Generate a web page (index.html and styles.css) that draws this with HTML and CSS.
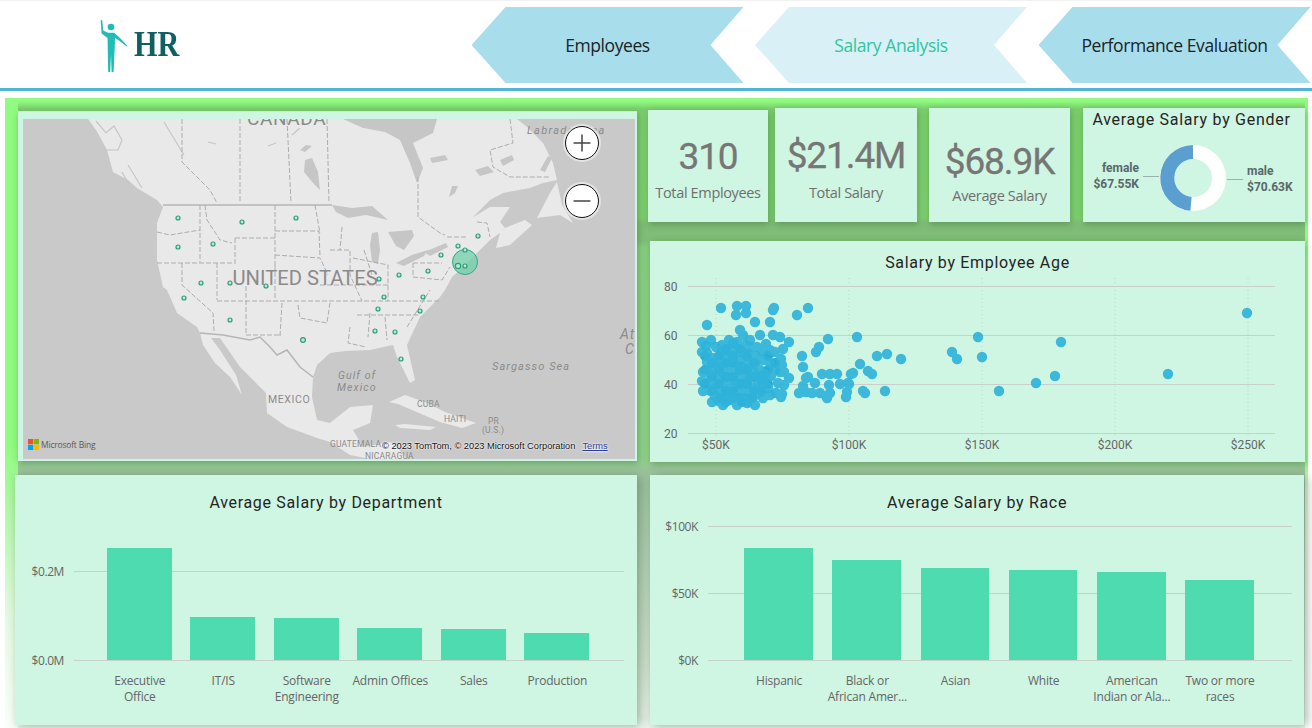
FILE: index.html
```html
<!DOCTYPE html>
<html lang="en">
<head>
<meta charset="utf-8">
<title>HR Salary Analysis</title>
<link rel="stylesheet" href="styles.css">
</head>
<body>
<header class="topbar">
  <div class="logo">
    <svg class="logo-figure" viewBox="98 18 32 56" aria-hidden="true">
      <circle cx="111" cy="27" r="3.3"/>
      <path d="M100.6 20.5 L102.2 20 L103.2 30.6 L108 32.8 H114.2 L120.5 38.5 L127.6 46 L126.8 46.6 L119 40.6 L115 37.8 L114.6 50 L113.6 72 H111.6 L111 54 L110.2 72 H108.2 L107.8 50 L107.6 38 L101.6 33.6 Z"/>
    </svg>
    <span class="logo-text">HR</span>
  </div>
  <nav class="tabs">
    <a class="tab">Employees</a>
    <a class="tab tab-active">Salary Analysis</a>
    <a class="tab">Performance Evaluation</a>
  </nav>
</header>
<main class="board">
  <section class="card map-card">
    <div class="map">
      <svg class="map-svg" viewBox="23 119 612 340" aria-label="Map of employees by state">
        <path class="land" d="M88 119 L96 130 L100 137 L107 150 L113 172 L128 180 L137 188 L157 200 L163 207 L157 223 L157 260 L163 287 L167 290 L177 313 L197 327 L200 333 L203 345 L215 363 L230 377 L242 395 L236 375 L220 350 L211 338 L220 338 L240 367 L266 393 L267 413 L287 427 L317 438 L330 442 L350 455 L370 459 L407 459 L397 447 L390 442 L363 447 L353 430 L370 423 L373 405 L350 407 L330 423 L317 420 L312 397 L313 377 L317 365 L330 353 L345 351 L370 350 L393 345 L397 357 L410 383 L415 380 L407 345 L420 317 L440 297 L445 290 L452 277 L462 268 L478 252 L490 240 L500 233 L496 248 L510 245 L532 225 L525 220 L505 228 L500 222 L510 207 L490 207 L480 213 L460 225 L457 233 L490 200 L503 193 L530 188 L543 183 L557 180 L553 163 L543 143 L527 127 L517 119 Z"/>
        <path class="land" d="M537 218 L550 193 L557 182 L562 205 L573 223 L560 215 Z"/>
        <path class="land" d="M389 402 L405 395 L425 402 L445 412 L476 423 L462 428 L440 422 L412 410 L398 404 Z"/>
        <path class="land" d="M395 425 L405 424 L436 427 L430 430 L400 428 Z"/>
        <path class="water" d="M343 119 L363 128 L385 132 L400 140 L410 163 L417 183 L423 168 L413 143 L433 133 L437 119 Z"/>
        <path class="water" d="M305 160 L312 158 L318 172 L320 190 L313 183 L304 172 Z"/>
        <path class="water" d="M332 205 L352 208 L372 206 L388 220 L366 215 L348 218 L336 212 Z"/>
        <path class="water" d="M372 233 L378 232 L380 250 L378 264 L372 262 L370 245 Z"/>
        <path class="water" d="M388 232 L412 230 L414 236 L404 250 L396 246 Z"/>
        <path class="water" d="M396 263 L412 255 L428 250 L424 256 L404 266 Z"/>
        <path class="water" d="M424 252 L446 243 L448 247 L430 256 Z"/>
        <path class="water" d="M449 197 L455 193 L458 186 L452 186 Z M430 158 L445 155 L448 160 L432 163 Z M300 150 L306 145 L312 146 L305 152 Z M475 170 L488 166 L494 172 L480 176 Z M500 160 L512 155 L514 160 L503 166 Z M540 170 L548 156 L552 158 L545 172 Z"/>
        <path class="fjord" d="M96 121 L106 133 L114 126 L122 140 L118 150 L104 150 M122 172 L132 190 M128 165 L142 188 M184 155 L164 122 M208 142 L216 144 M268 146 L276 143 M292 135 L300 128"/>
        <path class="border-solid" d="M163 205 H332 M200 333 L223 335 L250 340 L260 337 L270 347 L277 355 L287 350 L300 367 L313 377"/>
        <path class="border-dash" d="M182 119 V162 L195 175 L210 190 L217 203 M240 119 V203 M287 119 L291 203 M327 119 L329 203 M200 205 V262 M205 205 L207 220 L220 240 L232 243 M235 238 H275 M235 238 V265 M275 205 V265 M275 231 H319 L320 257 M275 255 L320 258 L328 275 M315 205 L320 233 M157 232 L170 235 L200 230 M157 263 H233 M182 263 V285 L213 313 L214 331 M217 263 V300 M217 301 H440 M246 286 V335 M246 335 H280 M282 303 L280 336 M298 305 L300 318 L327 323 L330 303 M275 265 V300 M330 250 H350 V275 L362 301 M353 258 L388 265 V301 M413 263 H442 M413 263 V277 L442 280 L450 267 M418 177 V217 L440 233 L445 235 M447 237 H467 M477 222 L487 223 L490 237 M510 119 L513 143 L490 150 L493 167 L510 177 H550 M357 315 H420 M370 313 L368 337 M385 317 L387 340 M350 327 L348 343 L366 347 M407 327 L430 290 M342 227 L340 250 M320 285 H388 M364 250 L372 275"/>
        <text class="lbl lbl-country" x="247" y="125">CANADA</text>
        <text class="lbl lbl-us" x="232.5" y="285">UNITED STATES</text>
        <text class="lbl lbl-small" x="268" y="403">MEXICO</text>
        <text class="lbl lbl-sea lbl-labrador" x="527" y="134">Labrador Sea</text>
        <text class="lbl lbl-sea lbl-sargasso" x="492" y="370">Sargasso Sea</text>
        <text class="lbl lbl-sea" x="338" y="379">Gulf of</text>
        <text class="lbl lbl-sea" x="337" y="391">Mexico</text>
        <text class="lbl lbl-sea lbl-atl" x="620" y="339">At</text>
        <text class="lbl lbl-sea lbl-atl" x="625" y="354">C</text>
        <text class="lbl lbl-tiny" x="417" y="407">CUBA</text>
        <text class="lbl lbl-tiny" x="444" y="422">HAITI</text>
        <text class="lbl lbl-tiny" x="488" y="424">PR</text>
        <text class="lbl lbl-tiny" x="482" y="433">(U.S.)</text>
        <text class="lbl lbl-tiny" x="330" y="447">GUATEMALA</text>
        <text class="lbl lbl-tiny" x="365" y="459">NICARAGUA</text>
        <g class="pins">
          <circle class="pin-big" cx="465" cy="262" r="12.5"/>
          <circle cx="178" cy="218" r="2"/><circle cx="242" cy="222" r="2"/><circle cx="296" cy="218" r="2"/>
          <circle cx="178" cy="247" r="2"/><circle cx="213" cy="244" r="2"/><circle cx="201" cy="283" r="2"/>
          <circle cx="230" cy="283" r="2"/><circle cx="266" cy="286" r="2"/><circle cx="184" cy="298" r="2"/>
          <circle cx="230" cy="320" r="2"/><circle cx="303" cy="340" r="2.4"/><circle cx="478" cy="236" r="2"/>
          <circle cx="458" cy="246" r="2"/><circle cx="465" cy="250" r="2"/><circle cx="441" cy="255" r="2"/>
          <circle cx="458" cy="266" r="2.6"/><circle cx="465" cy="266" r="2"/><circle cx="428" cy="271" r="2"/>
          <circle cx="399" cy="275" r="2"/><circle cx="379" cy="279" r="2"/><circle cx="384" cy="297" r="2"/>
          <circle cx="423" cy="297" r="2"/><circle cx="378" cy="309" r="2"/><circle cx="420" cy="311" r="2"/>
          <circle cx="375" cy="331" r="2"/><circle cx="395" cy="332" r="2"/><circle cx="401" cy="359" r="2"/>
        </g>
      </svg>
      <div class="map-controls">
        <button class="zoom-btn"><svg viewBox="0 0 34 34"><path d="M8 17 H26 M17 8 V26"/></svg></button>
        <button class="zoom-btn"><svg viewBox="0 0 34 34"><path d="M8 17 H26"/></svg></button>
      </div>
      <div class="bing">
        <svg class="bing-logo" viewBox="0 0 11 11"><rect class="ms-r" width="5.2" height="5.2"/><rect class="ms-g" x="5.8" width="5.2" height="5.2"/><rect class="ms-b" y="5.8" width="5.2" height="5.2"/><rect class="ms-y" x="5.8" y="5.8" width="5.2" height="5.2"/></svg>
        <span>Microsoft Bing</span>
      </div>
      <div class="attribution"><span>© 2023 TomTom, © 2023 Microsoft Corporation</span><a class="terms">Terms</a></div>
    </div>
  </section>

  <div class="right-top">
    <div class="kpis">
      <div class="card kpi kpi-employees"><div class="kpi-value">310</div><div class="kpi-label">Total Employees</div></div>
      <div class="card kpi kpi-total"><div class="kpi-value">$21.4M</div><div class="kpi-label">Total Salary</div></div>
      <div class="card kpi kpi-average"><div class="kpi-value">$68.9K</div><div class="kpi-label">Average Salary</div></div>
      <div class="card gender">
        <h2 class="gender-title">Average Salary by Gender</h2>
        <div class="gender-body">
          <div class="legend legend-left"><b>female</b><b>$67.55K</b></div>
          <span class="leader leader-left"></span>
          <svg class="donut" viewBox="0 0 68 68" aria-hidden="true">
            <circle class="donut-male" cx="34" cy="34" r="26"/>
            <path class="donut-female" d="M34 8 A26 26 0 0 0 32 59.9"/>
          </svg>
          <span class="leader leader-right"></span>
          <div class="legend legend-right"><b>male</b><b>$70.63K</b></div>
        </div>
      </div>
    </div>
    <section class="card scatter">
      <h2 class="card-title">Salary by Employee Age</h2>
      <svg class="scatter-svg" viewBox="650 273 655 189" aria-label="Scatter chart">
        <path class="grid-x" d="M716 278 V436 M849 278 V436 M982 278 V436 M1115 278 V436 M1248 278 V436"/>
        <path class="grid-y" d="M688 286.5 H1275 M688 335.5 H1275 M688 384.5 H1275 M688 433.5 H1275"/>
        <text class="axis" x="664" y="291">80</text>
        <text class="axis" x="664" y="340">60</text>
        <text class="axis" x="664" y="389">40</text>
        <text class="axis" x="664" y="438">20</text>
        <text class="axis mid" x="716" y="449">$50K</text>
        <text class="axis mid" x="849" y="449">$100K</text>
        <text class="axis mid" x="982" y="449">$150K</text>
        <text class="axis mid" x="1115" y="449">$200K</text>
        <text class="axis mid" x="1248" y="449">$250K</text>
        <path class="dots-under" d="M726 349h0M740 349h0M705 356h0M719 356h0M733 356h0M747 356h0M768 356h0M712 363h0M726 363h0M733 363h0M754 363h0M775 363h0M705 370h0M719 370h0M740 370h0M747 370h0M768 370h0M712 377h0M726 377h0M733 377h0M754 377h0M761 377h0M705 384h0M719 384h0M740 384h0M747 384h0M768 384h0M712 391h0M726 391h0M733 391h0M754 391h0M761 391h0M720 398h0M733 398h0M740 398h0M752 398h0M726 402h0M742 402h0"/>
        <g class="dots">
          <path d="M1247 313h0M1168 374h0M1061 342h0M1055 376h0M1036 383h0M999 391h0M978 337h0M982 357h0M952 352h0M957 359h0M901 359h0M887 354h0M877 356h0M857 337h0M860 364h0M868 371h0M872 374h0M885 391h0M863 391h0M865 393h0M853 373h0M851 374h0M848 383h0M846 397h0M847 392h0M849 384h0M837 374h0M840 384h0M830 374h0M822 374h0M827 398h0M829 385h0M830 393h0M820 393h0M812 393h0M806 392h0M799 393h0M803 386h0M806 378h0M808 377h0M815 383h0M803 367h0M802 356h0M816 352h0M819 347h0M828 339h0M797 315h0M808 308h0M774 308h0M773 310h0M770 322h0M755 322h0M721 308h0M737 306h0M746 306h0M736 315h0M746 313h0M707 325h0M740 330h0M743 335h0M760 335h0M773 335h0M780 337h0M789 342h0M702 342h0M711 340h0M702 352h0M707 353h0M722 345h0M729 340h0M737 342h0M745 345h0M750 347h0M757 347h0M762 351h0M766 344h0M770 350h0M775 352h0M783 349h0M781 359h0M782 365h0M780 372h0M784 372h0M789 378h0M784 385h0M778 383h0M776 393h0M781 397h0M782 394h0"/>
          <path d="M770 395h0M763 398h0M755 405h0M750 402h0M745 398h0M737 405h0M731 400h0M723 405h0M719 401h0M715 396h0M711 391h0M703 391h0M702 381h0M703 372h0M710 381h0M708 372h0M707 362h0M714 358h0M721 352h0M728 350h0M735 349h0M742 352h0M749 354h0M756 356h0M763 360h0M770 363h0M775 370h0M771 376h0M765 380h0M758 382h0"/>
          <path d="M752 388h0M745 392h0M738 396h0M730 394h0M722 395h0M716 388h0M720 380h0M715 372h0M713 365h0M720 362h0M727 358h0M734 357h0M741 360h0M748 362h0M755 364h0M760 370h0M757 376h0M750 378h0M744 384h0M737 388h0M730 387h0M723 386h0M727 380h0"/>
          <path d="M722 372h0M720 367h0M727 365h0M734 364h0M741 367h0M748 369h0M753 372h0M748 374h0M741 377h0M735 380h0M729 374h0M734 372h0M741 372h0M760 392h0M755 395h0M768 388h0M765 374h0M762 385h0M712 402h0M726 401h0M747 403h0M706 346h0M716 347h0M733 343h0M750 340h0"/>
        </g>
      </svg>
    </section>
  </div>

  <section class="card bars bars-dept">
    <h2 class="card-title">Average Salary by Department</h2>
    <div class="plot">
      <span class="gridline" style="top:45px"><em>$0.2M</em></span>
      <span class="gridline" style="top:134px"><em>$0.0M</em></span>
      <div class="bar-row">
        <i class="bar" style="height:112px"></i><i class="bar" style="height:43px"></i><i class="bar" style="height:42px"></i><i class="bar" style="height:32px"></i><i class="bar" style="height:31px"></i><i class="bar" style="height:27px"></i>
      </div>
    </div>
    <div class="cats">
      <span>Executive Office</span><span>IT/IS</span><span>Software Engineering</span><span>Admin Offices</span><span>Sales</span><span>Production</span>
    </div>
  </section>

  <section class="card bars bars-race">
    <h2 class="card-title">Average Salary by Race</h2>
    <div class="plot">
      <span class="gridline" style="top:0"><em>$100K</em></span>
      <span class="gridline" style="top:67px"><em>$50K</em></span>
      <span class="gridline" style="top:134px"><em>$0K</em></span>
      <div class="bar-row">
        <i class="bar" style="height:112px"></i><i class="bar" style="height:100px"></i><i class="bar" style="height:92px"></i><i class="bar" style="height:90px"></i><i class="bar" style="height:88px"></i><i class="bar" style="height:80px"></i>
      </div>
    </div>
    <div class="cats">
      <span>Hispanic</span><span>Black or African Amer...</span><span>Asian</span><span>White</span><span>American Indian or Ala...</span><span>Two or more races</span>
    </div>
  </section>
</main>
</body>
</html>
```
FILE: styles.css
```css
* { box-sizing: border-box; }
html, body { margin: 0; padding: 0; height: 728px; overflow: hidden; background: #fff; }
body { font-family: Roboto, "Liberation Sans", sans-serif; color: #252423; }

.topbar {
  height: 91px;
  display: flex;
  align-items: flex-start;
  border-top: 1px solid #f2f2f2;
  border-bottom: 3px solid #53b5d5;
}
.logo { display: flex; align-items: flex-end; margin: 17px 0 0 98px; }
.logo-figure { width: 32px; height: 56px; fill: #1fbdb5; }
.logo-text {
  font: 700 36px/1 "Liberation Serif", serif;
  color: #0f5f63;
  margin: 0 0 12px 4px;
  transform: scaleX(.84);
  transform-origin: left center;
}
.tabs { display: flex; gap: 11.5px; margin: 6px 1.5px 0 auto; }
.tab {
  width: 272px;
  height: 76px;
  display: flex;
  align-items: center;
  justify-content: center;
  background: #a8ddec;
  clip-path: polygon(34px 0, 100% 0, 239px 50%, 100% 100%, 34px 100%, 0 50%);
  font: 400 17.5px "Open Sans", sans-serif;
  letter-spacing: -0.42px;
  color: #182426;
}
.tab-active { background: #d9f0f7; color: #33c49c; }

.board {
  position: relative;
  width: 1303px;
  height: 630px;
  margin: 7px 0 0 5px;
  padding: 10px 0 0 10px;
  display: grid;
  grid-template-columns: 622px 657px;
  grid-template-rows: 354px 250px;
  column-gap: 11px;
  row-gap: 13px;
  background: linear-gradient(180deg, #90fb80 0, #90fb80 3px, #7ad06c 11px, #7dd070 120px, #7fbd78 125px, #7fbd78 142px, #86cf80 150px, #8ed088 360px, #9cc49e 374px, #cfe4cf 560px, #eef7ee 630px);
}
.board::before,
.board::after {
  content: "";
  position: absolute;
  top: 0;
  bottom: 0;
  background: linear-gradient(180deg, #90fb80 0, #90fb80 55%, #b8f9b0 68%, #e2fbe0 82%, #fafffa 100%);
}
.board::before { left: 0; width: 13px; }
.board::after { right: 0; width: 3px; background: linear-gradient(180deg, #90fb80 0, #90fb80 58%, #e8f6e8 62%, #fff 100%); }
.card {
  position: relative;
  z-index: 1;
  background: #cff5e3;
  box-shadow: 1px 2px 7px rgba(40, 70, 40, .35);
}

.map-card { margin: 3px 0 1px 3px; padding: 8px 2px 2px 5px; }
.map { position: relative; height: 340px; background: #c9c9c9; overflow: hidden; }
.map-svg { display: block; width: 612px; height: 340px; }
.land { fill: #e9e9e9; }
.water { fill: #c6c6c6; }
.fjord { fill: none; stroke: #c6c6c6; stroke-width: 1.2; }
.border-solid { fill: none; stroke: #b5b5b5; stroke-width: 1.5; }
.border-dash { fill: none; stroke: #adadad; stroke-width: 1; stroke-dasharray: 5 2; }
.lbl { font-family: Roboto, sans-serif; fill: #8b8b8b; }
.lbl-country { font-size: 19px; letter-spacing: .6px; }
.lbl-us { font-size: 20.2px; }
.lbl-small { font-size: 10.5px; letter-spacing: .6px; }
.lbl-sea { font-size: 10.5px; font-style: italic; letter-spacing: 1.1px; }
.lbl-sargasso { font-size: 11px; }
.lbl-labrador { font-size: 11px; letter-spacing: 1.3px; }
.lbl-atl { font-size: 14px; }
.lbl-tiny { font-size: 8.5px; letter-spacing: .2px; }
.pins circle { fill: #bfe7d5; stroke: #2d9e7a; stroke-width: 1.2; }
.pins .pin-big { fill: #6fd0ab; fill-opacity: .75; stroke: #3aa585; stroke-width: 1; }
.map-controls {
  position: absolute;
  top: 7px;
  right: 36px;
  display: flex;
  flex-direction: column;
  gap: 24px;
}
.zoom-btn {
  width: 34px;
  height: 34px;
  padding: 0;
  border: 1.5px solid #111;
  border-radius: 50%;
  background: #fff;
  box-shadow: 0 0 0 2px rgba(235,235,235,.8);
  display: block;
}
.zoom-btn svg { display: block; width: 100%; height: 100%; fill: none; stroke: #444; stroke-width: 1.6; }
.bing {
  position: absolute;
  left: 5px;
  bottom: 9px;
  display: flex;
  align-items: center;
  gap: 2px;
  font: 8.5px "Open Sans", sans-serif;
  letter-spacing: -.2px;
  color: #5a5a5a;
}
.bing-logo { width: 11px; height: 11px; }
.ms-r { fill: #f25022; }
.ms-g { fill: #7fba00; }
.ms-b { fill: #00a4ef; }
.ms-y { fill: #ffb900; }
.attribution {
  position: absolute;
  left: 359px;
  bottom: 7px;
  display: flex;
  gap: 7px;
  font: 9.25px/12px "Liberation Sans", sans-serif;
  color: #111;
  white-space: nowrap;
  text-shadow: 0 0 2px #fff, 0 0 2px #fff;
}
.terms { color: #2a3f96; text-decoration: underline; }

.right-top { display: flex; flex-direction: column; gap: 19px; }
.kpis { height: 114px; display: flex; align-items: flex-end; }
.kpi { height: 114px; display: flex; flex-direction: column; align-items: center; text-align: center; color: #7a7a7a; }
.kpi-employees { width: 120px; height: 112px; margin-right: 7px; padding-top: 26px; }
.kpi-total { width: 142px; margin-right: 12px; padding-top: 27px; }
.kpi-average { width: 141px; margin-right: 13px; padding-top: 33px; }
.kpi-value { font-size: 37px; line-height: 42px; font-weight: 400; letter-spacing: -1.1px; color: #767676; -webkit-text-stroke: .3px #767676; }
.kpi-label { font: 400 14.5px/20px "Open Sans", sans-serif; letter-spacing: -.35px; color: #6f6f6f; margin-top: 5px; }
.kpi-total .kpi-label { margin-top: 6px; }
.kpi-average .kpi-label { margin-top: 3px; }
.gender { width: 222px; height: 114px; padding-top: 2px; }
.gender-title { margin: 0; padding-right: 5px; font-size: 16px; line-height: 20px; font-weight: 400; letter-spacing: .72px; text-align: center; color: #252423; white-space: nowrap; }
.gender-body { display: flex; align-items: center; height: 80px; margin-top: 8px; }
.legend { display: flex; flex-direction: column; font-size: 12px; line-height: 16px; color: #59686a; }
.legend b { font-weight: 700; }
.legend-left { width: 56px; margin: -5px 0 0 0; align-items: flex-end; }
.legend-right { width: 52px; margin: 1px 0 0 4px; }
.leader { height: 1px; width: 16px; background: #9db3aa; }
.leader-left { margin: -4px 0 0 4px; }
.leader-right { margin-top: 2px; }
.donut { width: 68px; height: 68px; flex: none; fill: none; stroke-width: 14; }
.donut-male { stroke: #fff; }
.donut-female { stroke: #5a9fd0; }

.card-title { margin: 0; font-size: 16px; line-height: 20px; font-weight: 400; letter-spacing: .68px; text-align: center; color: #252423; }
.scatter { height: 221px; margin-left: 2px; padding-top: 12px; width: 655px; }
.scatter-svg { display: block; width: 655px; height: 189px; }
.grid-x { fill: none; stroke: #b9d6c6; stroke-dasharray: 1 3; }
.grid-y { fill: none; stroke: #c9cfca; }
.axis { font-family: Roboto, sans-serif; font-size: 12px; fill: #666; }
.mid { text-anchor: middle; }
.dots-under { fill: none; stroke: #2aaad1; stroke-width: 10; stroke-linecap: round; }
.dots path { fill: none; stroke: #2fb3d9; stroke-opacity: .93; stroke-width: 10.4; stroke-linecap: round; }

.bars { height: 250px; padding-top: 18px; box-shadow: 3px 1px 10px rgba(50, 70, 50, .4); }
.bars-dept { width: 622px; }
.bars-race { width: 654px; margin-left: 2px; }
.plot { position: relative; height: 134px; }
.bars-dept .plot { margin: 13px 13px 0 59px; }
.bars-race .plot { margin: 13px 12px 0 58px; }
.gridline { position: absolute; left: 0; right: 0; height: 1px; background: #c9cfca; }
.gridline em { position: absolute; right: 100%; top: -7px; margin-right: 10px; font: 12px/16px "Open Sans", sans-serif; font-style: normal; letter-spacing: -.4px; color: #666; white-space: nowrap; }
.bar-row { position: absolute; inset: 0; display: flex; align-items: flex-end; }
.bars-dept .bar-row { gap: 18.5px; padding: 0 35px 0 33px; }
.bars-race .bar-row { gap: 19.7px; padding: 0 38px 0 36px; }
.bar { flex: 1; background: #4fdbb0; display: block; }
.cats { display: flex; margin-top: 13px; font: 12px/16px "Open Sans", sans-serif; letter-spacing: -.2px; color: #666; text-align: center; }
.cats span { flex: none; }
.bars-dept .cats { margin-left: 83px; }
.bars-dept .cats span { width: 83.5px; padding: 0 1px; }
.bars-race .cats { margin-left: 85px; }
.bars-race .cats span { width: 88.2px; padding: 0 3px; }
```
